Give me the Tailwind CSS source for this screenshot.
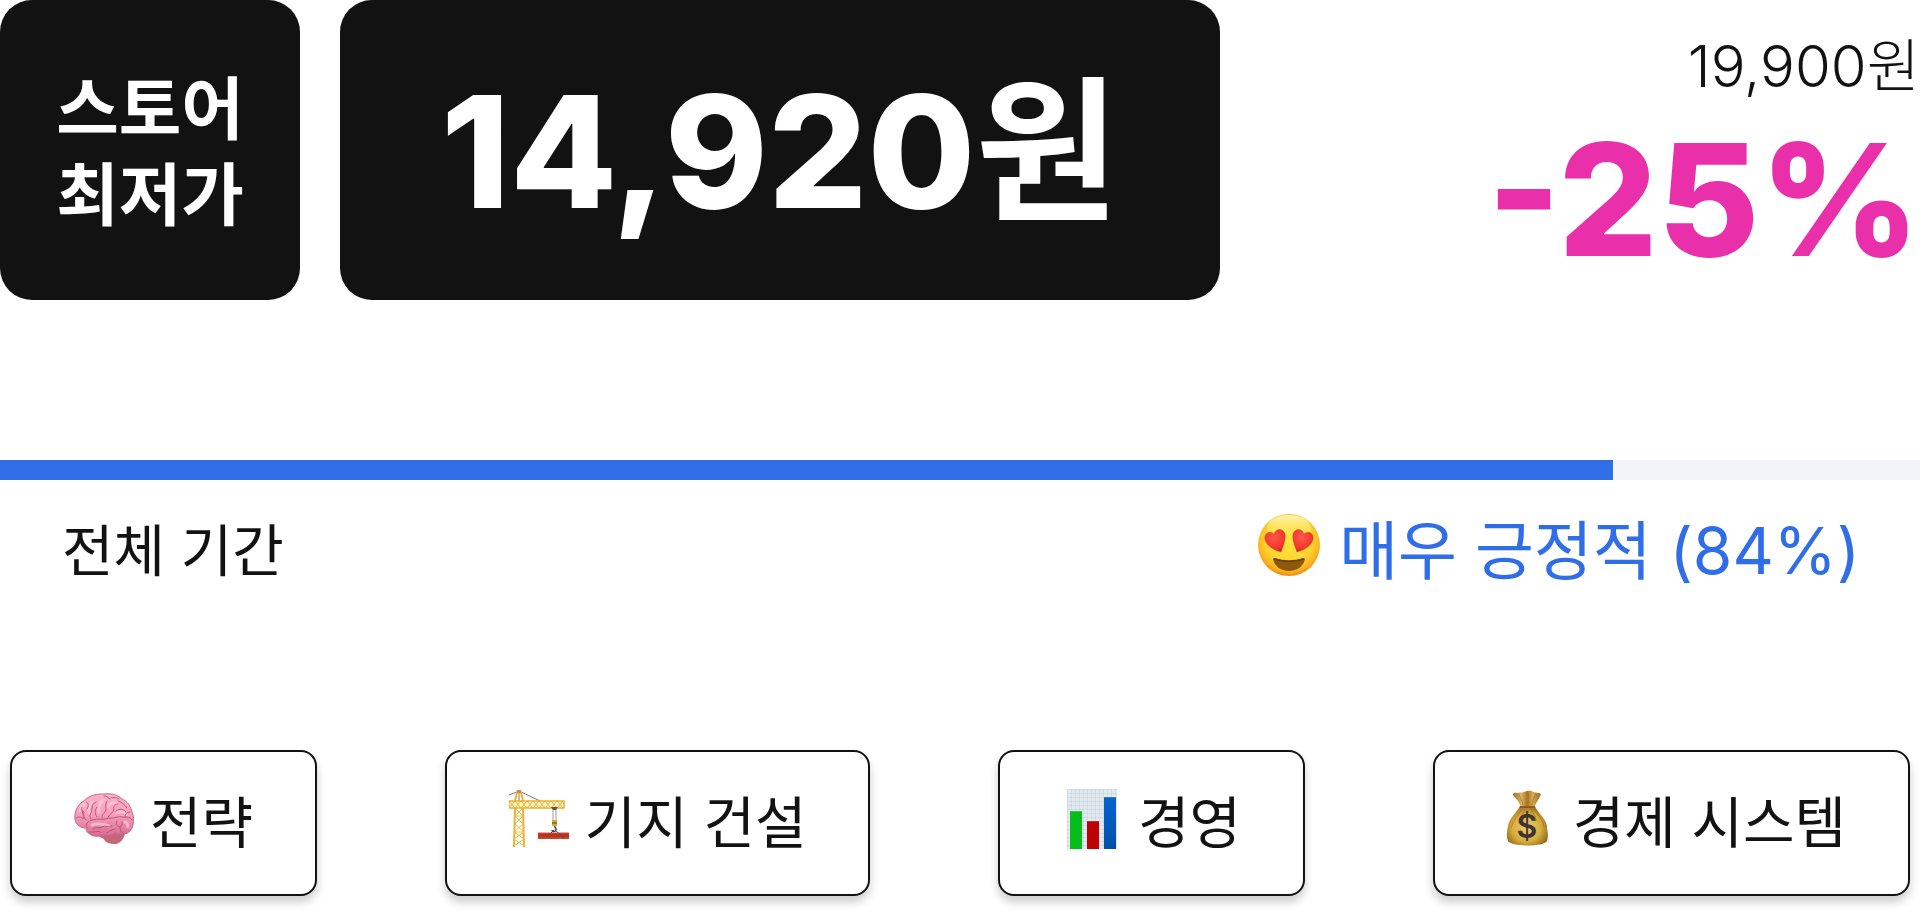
<!DOCTYPE html>
<html lang="ko">
<head>
    <meta charset="UTF-8">
    <meta name="viewport" content="width=device-width, initial-scale=1.0">
    <title>스토어 최저가</title>
    <script src="https://cdn.jsdelivr.net/npm/@tailwindcss/browser@4"></script>
</head>
<body class="bg-white pr-1 text-[#121212] font-['Inter','Noto_Sans_CJK_KR',sans-serif]">
    <!-- Price -->
    <section class="flex items-start">
        <div class="flex h-[300px] w-[300px] shrink-0 items-center justify-center rounded-[32px] bg-[#121212] pt-1 text-center text-[68px] leading-[86px] font-bold text-white">
            스토어<br>최저가
        </div>
        <div class="ml-10 flex h-[300px] w-[880px] shrink-0 items-center justify-center rounded-[32px] bg-[#121212] pt-1 font-extrabold text-white">
            <p class="flex items-baseline text-[156px] leading-[158px]">14,920<span class="font-bold">원</span></p>
        </div>
        <div class="flex grow flex-col items-end pt-6">
            <p class="flex items-baseline text-[58px] leading-[84px] font-light">19,900<span>원</span></p>
            <p class="text-[156px] leading-[184px] font-extrabold text-[#e92fa9]">-25%</p>
        </div>
    </section>

    <!-- Reviews -->
    <section class="mt-40">
        <div class="h-5 bg-[#f3f4f9]" role="progressbar" aria-label="전체 기간" aria-valuenow="84" aria-valuemin="0" aria-valuemax="100">
            <div class="h-5 bg-[#306ee8]" style="width: 84%"></div>
        </div>
        <div class="flex items-center justify-between pr-[60px] pl-[62px] pt-6">
            <p class="text-[56px] leading-[94px]">전체 기간</p>
            <p class="flex items-center gap-[18px] text-[64px] leading-[94px] text-[#306ee8]">
                <svg class="mb-3 h-16 w-16" viewBox="0 0 64 64" aria-hidden="true">
                    <defs>
                        <radialGradient id="face" cx="50%" cy="42%" r="58%">
                            <stop offset="0" stop-color="#ffe63e"/>
                            <stop offset=".65" stop-color="#ffd430"/>
                            <stop offset=".88" stop-color="#fbb01f"/>
                            <stop offset="1" stop-color="#ec8d0c"/>
                        </radialGradient>
                        <linearGradient id="shine" x1="0" y1="0" x2="0" y2="1">
                            <stop offset="0" stop-color="#fffbd0" stop-opacity=".85"/>
                            <stop offset="1" stop-color="#ffe94f" stop-opacity="0"/>
                        </linearGradient>
                        <radialGradient id="heart" cx="45%" cy="35%" r="70%">
                            <stop offset="0" stop-color="#ff594b"/>
                            <stop offset=".7" stop-color="#f4362f"/>
                            <stop offset="1" stop-color="#cf2123"/>
                        </radialGradient>
                    </defs>
                    <circle cx="32" cy="32" r="31" fill="url(#face)"/>
                    <ellipse cx="32" cy="15" rx="22" ry="13" fill="url(#shine)"/>
                    <path d="M24 39C16 37 9 32 8 26c-1-5 4-9 9-5 2-6 9-6 11 0 1 6-2 12-4 18z" fill="url(#heart)" stroke="#c8501b" stroke-width=".5"/>
                    <path d="M40 39c8-2 15-7 16-13 1-5-4-9-9-5-2-6-9-6-11 0-1 6 2 12 4 18z" fill="url(#heart)" stroke="#c8501b" stroke-width=".5"/>
                    <path d="M16 46c0-1 1-1 2-1 9 3 19 3 28 0 1 0 2 0 2 1-1 7-8 12-16 12s-15-5-16-12z" fill="#8c5a0c"/>
                    <path d="M17 46c9 3 21 3 30 0" fill="none" stroke="#6b3f08" stroke-width="1.500"/>
                </svg>
                <span>매우 긍정적 (84%)</span>
            </p>
        </div>
    </section>

    <!-- Tags -->
    <nav class="mt-[152px] mb-[18px] flex justify-between px-[10px] text-[56px] leading-[142px]">
        <a href="#" class="flex items-center gap-4 rounded-2xl border-2 border-[#121212] bg-white px-[62px] shadow-[0_6px_10px_rgba(0,0,0,0.2)]">
            <svg class="mb-2 h-[60px] w-[60px]" viewBox="0 0 60 60" aria-hidden="true">
                <defs>
                    <linearGradient id="brain" x1="0" y1="0" x2="0" y2="1">
                        <stop offset="0" stop-color="#f9b3c8"/>
                        <stop offset=".5" stop-color="#f79dbc"/>
                        <stop offset="1" stop-color="#d96a91"/>
                    </linearGradient>
                </defs>
                <g transform="translate(0 5)">
                    <path d="M30 41c3-2 18-4 21-3 0 5-4 12-10 12-5 0-11-2-11-5l-6-3z" fill="#c5677a"/>
                    <path d="M1 25C0 17 4 10 11 6 16 1 23 0 30 0c8-1 14 1 18 5 5 2 9 7 10 13 2 4 2 9 1 13-1 5-5 9-9 9-4 1-7 0-9-1-4 3-8 3-11 1-3 3-12 3-14 0-3-1-4-4-4-6-4 0-6-1-8-3-2-2-3-4-3-6z" fill="url(#brain)" stroke="#c96886" stroke-width="1"/>
                    <g fill="none" stroke="#fdd3df" stroke-width="3" stroke-linecap="round" opacity=".6">
                        <path d="M6 17c1-4 3-6 5-7M15 19c-1-5 1-9 3-11M25 18c-1-5 1-10 4-12M34 13c2-4 5-5 9-4M43 19c4-2 8-1 10 2M18 31c7-2 12-1 17 1M51 28c2 1 3 3 3 5"/>
                    </g>
                    <g fill="none" stroke="#b44d70" stroke-width="1" stroke-linecap="round" stroke-linejoin="round" opacity=".85">
                        <path d="M2 24c3-2 5-1 7 1 1-3 0-5-1-8M8 13c-1 3 0 4 2 5-1 3 0 6 2 8M12 8c3 1 3 4 1 7M17 25c-3-4 1-6 1-10 0-3 1-6 4-7M23 23c-3-4-2-7 0-10M28 24c-1-4 4-5 4-9 0-3-1-5 1-8M30 2c3 0 4 1 5 3 3-2 7-2 10 0M34 23c2-3 5-4 6-8-1-3 1-5 4-5M44 7c4 1 7 4 9 7M42 17c4-3 8-2 10 1M56 18c-3 0-5 2-5 5"/>
                        <path d="M13 34c-2-4 1-8 6-8 5-2 8 0 12-1 5-2 8 0 12-2 4-1 6 1 10 0 2 0 4 1 5 3M19 35c4-3 6 0 9-2 4-2 6 1 10-1M33 39c2-3 5-3 8-4M43 27c-2 3 0 5 3 6 2-1 3-3 2-5M46 33c0 3 1 5 3 6M16 38c4 1 7-2 10 0"/>
                    </g>
                </g>
            </svg>
            <span>전략</span>
        </a>
        <a href="#" class="flex items-center gap-4 rounded-2xl border-2 border-[#121212] bg-white px-[62px] shadow-[0_6px_10px_rgba(0,0,0,0.2)]">
            <svg class="mb-2 h-[60px] w-[60px]" viewBox="0 0 60 60" fill="none" aria-hidden="true">
                <path d="M0 6l10-4 36 17M10 2v10" stroke="#777b7d" stroke-width="1"/>
                <path d="M8 3l-2 9v7L5 58M12 3l2 9v7l1 39" stroke="#ebb02c" stroke-width="2"/>
                <path d="M6 12l8 7-8 8 8 8-9 8 10 7-10 7M14 12l-8 7 8 8-8 8 9 8-10 7 10 7M6 27h8M5 43h9" stroke="#efbb3d" stroke-width="1"/>
                <path d="M0 12h55v7H0z" fill="#fff3c9" stroke="#ebb02c" stroke-width="1.500"/>
                <path d="M0 19l6-7 6 7 6-7 6 7 6-7 6 7 6-7 6 7 6-7M0 12l6 7 6-7 6 7 6-7 6 7 6-7 6 7 6-7 6 7" stroke="#ebb02c" stroke-width="1"/>
                <path d="M8 1h4v3H8z" fill="#c2922c"/>
                <path d="M44 19v13M47 19v13" stroke="#9ba0a2" stroke-width="1"/>
                <path d="M42 18h7l-2 3h-3z" fill="#67583c"/>
                <path d="M43 31h5v6h-5z" fill="#dda82d"/>
                <path d="M43 34h5" stroke="#4c4535"/>
                <path d="M46 37c-1 2 2 2 1 4-1 2-4 2-4 0" stroke="#3c4042" stroke-width="1.500"/>
                <path d="M29 44h31v6H29z" fill="#b93420"/>
                <path d="M29 44h31M29 49h31" stroke="#dc5138" stroke-width="1"/>
                <path d="M45 41l-8 8M46 41l9 8" stroke="#515355" stroke-width="1"/>
            </svg>
            <span>기지 건설</span>
        </a>
        <a href="#" class="flex items-center gap-4 rounded-2xl border-2 border-[#121212] bg-white px-[62px] shadow-[0_6px_10px_rgba(0,0,0,0.2)]">
            <svg class="mb-2 h-[60px] w-[60px]" viewBox="0 0 60 60" aria-hidden="true">
                <defs>
                    <pattern id="grid" x="5" width="4" height="4" patternUnits="userSpaceOnUse">
                        <path d="M0 0h4v4H0z" fill="#e5e9ec"/>
                        <path d="M0 0h4M0 0v4" stroke="#bcd3e6" stroke-width="1"/>
                    </pattern>
                    <linearGradient id="bar" x1="0" y1="0" x2="0" y2="1">
                        <stop offset="0" stop-color="#0662d2"/>
                        <stop offset="1" stop-color="#0350a9"/>
                    </linearGradient>
                </defs>
                <path d="M5 0h50v60H5z" fill="url(#grid)"/>
                <path d="M8 22h12v38H8z" fill="#07bd1c"/>
                <path d="M25 32h12v28H25z" fill="#bd0205"/>
                <path d="M42 8h12v52H42z" fill="url(#bar)"/>
                <path d="M8 22h12M25 32h12M42 8h12" stroke="#fff" stroke-opacity=".3"/>
            </svg>
            <span>경영</span>
        </a>
        <a href="#" class="flex items-center gap-4 rounded-2xl border-2 border-[#121212] bg-white px-[62px] shadow-[0_6px_10px_rgba(0,0,0,0.2)]">
            <svg class="mb-2 h-[60px] w-[60px]" viewBox="0 0 60 60" aria-hidden="true">
                <defs>
                    <radialGradient id="bag" cx="48%" cy="55%" r="58%">
                        <stop offset="0" stop-color="#edce68"/>
                        <stop offset=".6" stop-color="#d8ae40"/>
                        <stop offset="1" stop-color="#956719"/>
                    </radialGradient>
                    <linearGradient id="neck" x1="0" x2="1">
                        <stop offset="0" stop-color="#9b6d23"/>
                        <stop offset=".3" stop-color="#dfb561"/>
                        <stop offset=".5" stop-color="#a67827"/>
                        <stop offset=".7" stop-color="#d9aa51"/>
                        <stop offset="1" stop-color="#966821"/>
                    </linearGradient>
                </defs>
                <g transform="translate(9 2)">
                    <path d="M7 4c0-3 3-2 5-2 2-1 4 0 6-1 3-1 7-2 9 0 3 1 5 0 8 2-2 5-5 9-7 13H15C13 11 10 7 7 4z" fill="url(#neck)"/>
                    <path d="M14 15h15c1 5 11 12 12 20 0 5 2 9 0 15-3 6-36 6-39 0-2-5-1-10 0-15 1-8 10-15 12-20z" fill="url(#bag)"/>
                    <g fill="none" stroke="#976b1f" stroke-opacity=".55">
                        <path d="M16 18c-3 6-9 11-11 19M19 18c-2 5-4 7-6 14M25 18c2 5 4 7 6 12M28 18c3 5 9 10 10 18M12 3c3 4 4 7 5 11M22 2c1 4 0 8 0 12M30 3c-3 4-3 8-4 11"/>
                    </g>
                    <path d="M14 15h15v2H14z" fill="#8b5e20"/>
                    <text x="21" y="47" text-anchor="middle" class="text-[32px] font-semibold" fill="#3f3431">$</text>
                </g>
            </svg>
            <span>경제 시스템</span>
        </a>
    </nav>
</body>
</html>
